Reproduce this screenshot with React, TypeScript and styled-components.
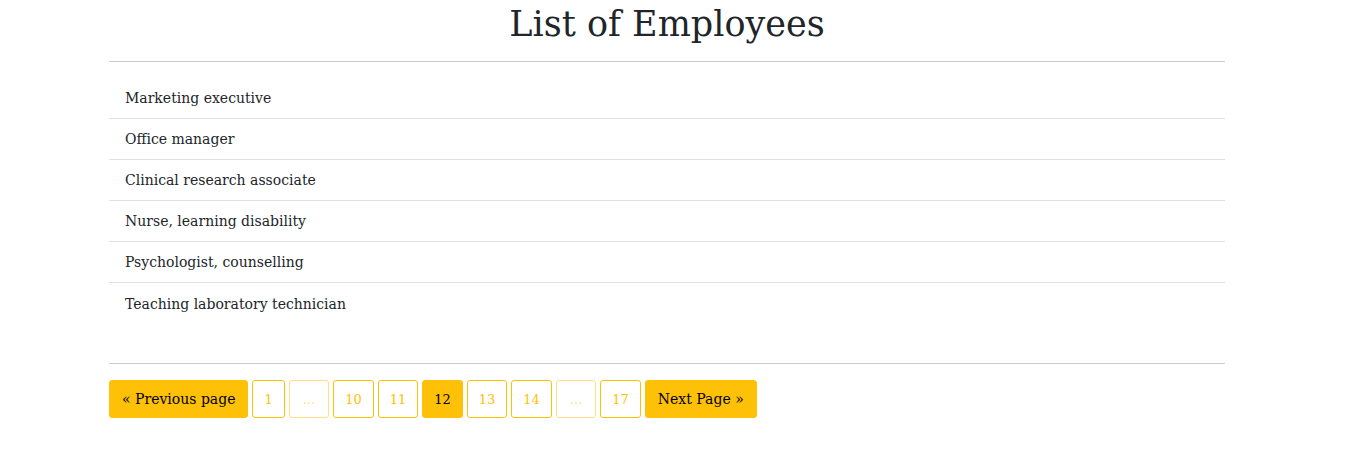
import React from 'react';
import styled, { createGlobalStyle } from 'styled-components';

const Colors = {
	Text: '#212529',
	Rule: '#cccccc',
	RowBorder: '#dee2e6',
	Warning: '#ffc107',
	WarningLight: '#ffe083',
};

const GlobalStyle = createGlobalStyle`
	html, body {
		margin: 0;
		padding: 0;
		background: #fff;
	}
	body {
		font-family: "DejaVu Serif", "Liberation Serif", serif;
		color: ${Colors.Text};
	}
`;

const Page = styled.div`
	width: 1116px;
	margin-left: 109px;
	display: flex;
	flex-direction: column;
`;

const Title = styled.h1`
	margin: 0;
	height: 62px;
	line-height: 48px;
	font-size: 35px;
	font-weight: 400;
	text-align: center;
	border-bottom: 1px solid ${Colors.Rule};
	box-sizing: border-box;
`;

const List = styled.ul`
	list-style: none;
	margin: 16px 0 0;
	padding: 0;
	height: 285px;
	border-bottom: 1px solid ${Colors.Rule};
`;

const Row = styled.li`
	height: 41px;
	box-sizing: border-box;
	padding: 0 16px;
	display: flex;
	align-items: center;
	font-size: 14px;
	border-bottom: 1px solid ${Colors.RowBorder};

	&:last-child {
		border-bottom: none;
	}
`;

const Pager = styled.nav`
	display: flex;
	gap: 4px;
	margin-top: 16px;
`;

const PageButton = styled.button<{ $filled?: boolean; $muted?: boolean; $wide?: boolean }>`
	height: 38px;
	box-sizing: border-box;
	padding: 0 ${p => (p.$wide ? 12 : p.$muted ? 13 : 11)}px;
	font-family: inherit;
	font-size: ${p => (p.$wide ? 14 : 13)}px;
	border-radius: 3px;
	border: 1px solid ${p => (p.$muted ? Colors.WarningLight : Colors.Warning)};
	background: ${p => (p.$filled ? Colors.Warning : '#fff')};
	color: ${p => (p.$filled ? '#000' : p.$muted ? Colors.WarningLight : Colors.Warning)};
	cursor: pointer;
`;

const jobs = [
	'Marketing executive',
	'Office manager',
	'Clinical research associate',
	'Nurse, learning disability',
	'Psychologist, counselling',
	'Teaching laboratory technician',
];

const pages = ['1', '...', '10', '11', '12', '13', '14', '...', '17'];

const App = () => (
	<>
		<GlobalStyle />
		<Page>
			<Title>List of Employees</Title>
			<List>
				{jobs.map((j, i) => <Row key={i}>{j}</Row>)}
			</List>
			<Pager>
				<PageButton $filled $wide>« Previous page</PageButton>
				{pages.map((p, i) => (
					<PageButton key={i} $filled={p === '12'} $muted={p === '...'}>{p}</PageButton>
				))}
				<PageButton $filled $wide>Next Page »</PageButton>
			</Pager>
		</Page>
	</>
);

export default App;
